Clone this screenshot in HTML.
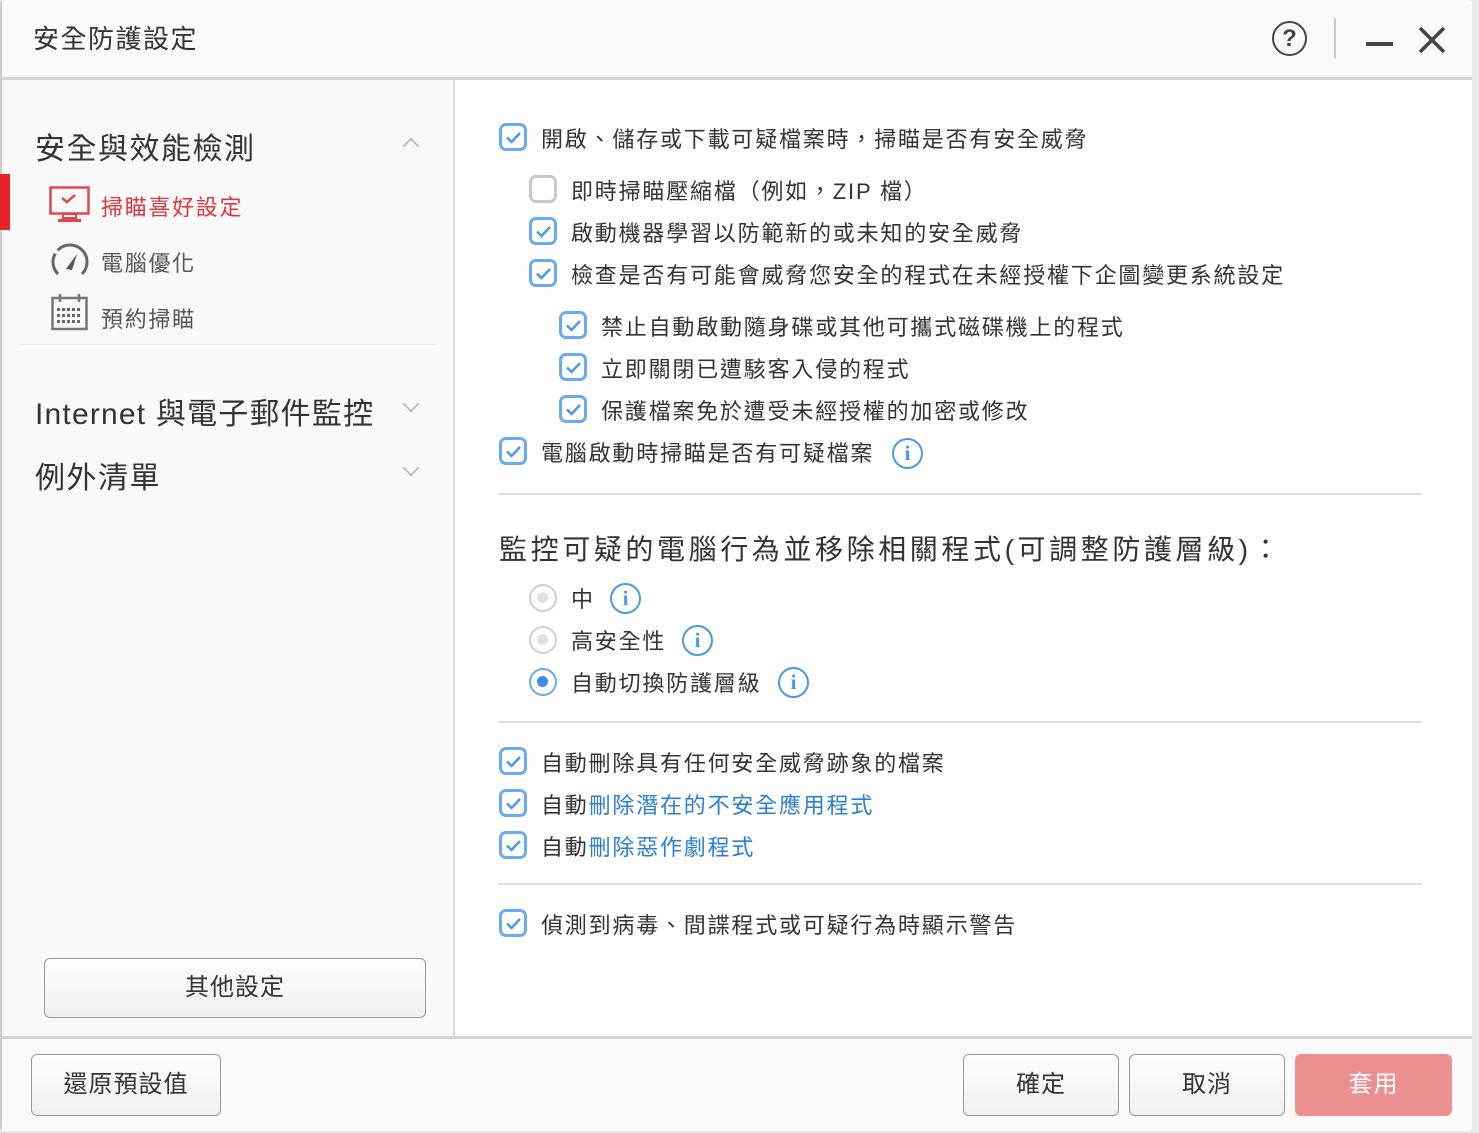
<!DOCTYPE html>
<html><head><meta charset="utf-8"><style>
*{margin:0;padding:0;box-sizing:border-box}
body{width:1479px;height:1133px;background:#e8e8e8;font-family:"Liberation Sans","Noto Sans CJK TC",sans-serif;color:#333;position:relative;overflow:hidden}
.win{position:absolute;left:0;top:0;width:1472px;height:1131px;background:#fff;border-radius:4px;box-shadow:inset 2px 0 0 #ccc;overflow:hidden}
.hdr{position:absolute;left:2px;top:0;right:0;height:80px;background:#fafafa;border-bottom:3px solid #d4d4d4}
.title{position:absolute;left:31px;top:19px;font-size:26px;letter-spacing:1.5px;color:#333}
.side{position:absolute;left:2px;top:80px;width:453px;height:956px;background:#f9f9f9;border-right:2px solid #ddd}
.ab{position:absolute;white-space:nowrap}
.nav{font-size:30px;letter-spacing:1.5px;color:#333}
.sub{font-size:22px;letter-spacing:1.7px;color:#555}
.it{font-size:22px;letter-spacing:1.8px;color:#333;line-height:28px;margin-top:2px}
.cb{position:absolute;width:28px;height:28px;border:3px solid #6aaaf0;border-radius:7px;background:#fff}
.cb.off{border-color:#c8c8c8}
.cb svg{position:absolute;left:2px;top:2px}
.rd{position:absolute;width:28px;height:28px;border:2.5px solid #cfcfcf;border-radius:50%;background:#fff}
.rd i{position:absolute;left:6px;top:6px;width:11px;height:11px;border-radius:50%;background:#e0e0e0}
.rd.on{border-color:#6aaaf0}.rd.on i{background:#3d8ee8}
.info{position:absolute;width:31px;height:31px;border:2.5px solid #4a98e6;border-radius:50%;color:#4a98e6;font:bold 21px "Liberation Serif",serif;text-align:center;line-height:26px}
.hr{position:absolute;left:498px;width:924px;height:2px;background:#ddd}
.btn{position:absolute;border:1.5px solid #999;border-radius:6px;background:linear-gradient(#fdfdfd,#f0f0f0);font-size:24px;text-align:center;color:#333;letter-spacing:1px}
.foot{position:absolute;left:2px;top:1036px;right:0;height:97px;background:#fafafa;border-top:3px solid #d4d4d4}
.blue{color:#2a7ed8}
.chev{position:absolute;width:12px;height:12px;border-right:2px solid #bbb;border-bottom:2px solid #bbb}
</style></head><body>
<div class="win">
<div class="hdr">
<div class="title">安全防護設定</div>
<div class="ab" style="left:1270px;top:21px;width:35px;height:35px;border:2.5px solid #444;border-radius:50%;text-align:center;font:bold 24px 'Liberation Sans',sans-serif;line-height:31px;color:#444">?</div>
<div class="ab" style="left:1332px;top:18px;width:2px;height:40px;background:#ccc"></div>
<div class="ab" style="left:1364px;top:42px;width:27px;height:4px;background:#444"></div>
<svg class="ab" style="left:1416px;top:26px" width="28" height="28"><path d="M2 2L26 26M26 2L2 26" stroke="#444" stroke-width="3.5"/></svg>
</div>
<div class="side">
<div class="ab" style="left:-2px;top:94px;width:10px;height:56px;background:#e8202a"></div>
<div class="ab nav" style="left:33px;top:44px">安全與效能檢測</div>
<div class="chev" style="left:403px;top:60px;transform:rotate(-135deg)"></div>
<svg class="ab" style="left:47px;top:106px" width="42" height="38"><rect x="1.5" y="1.5" width="38" height="26" fill="none" stroke="#e04850" stroke-width="2.5"/><path d="M13 12l5 4 8-7" fill="none" stroke="#e04850" stroke-width="2.5"/><rect x="14" y="28" width="13" height="4" fill="none" stroke="#e04850" stroke-width="2"/><rect x="9" y="33" width="23" height="3" fill="#e04850"/></svg>
<div class="ab sub" style="left:99px;top:110px;color:#e0353e">掃瞄喜好設定</div>
<svg class="ab" style="left:47px;top:162px" width="42" height="36"><path d="M9 32A17 17 0 1 1 33 32" fill="none" stroke="#666" stroke-width="3" stroke-dasharray="22 4 60"/><path d="M17 27L28 12 23 28Z" fill="#555"/></svg>
<div class="ab sub" style="left:99px;top:166px">電腦優化</div>
<svg class="ab" style="left:49px;top:213px" width="38" height="38"><rect x="1.5" y="5" width="34" height="31" fill="none" stroke="#777" stroke-width="2.5"/><path d="M9 1v8M28 1v8" stroke="#777" stroke-width="2.5"/><g fill="#666"><rect x="6" y="15" width="3" height="3"/><rect x="11" y="15" width="3" height="3"/><rect x="16" y="15" width="3" height="3"/><rect x="21" y="15" width="3" height="3"/><rect x="26" y="15" width="3" height="3"/><rect x="6" y="21" width="3" height="3"/><rect x="11" y="21" width="3" height="3"/><rect x="16" y="21" width="3" height="3"/><rect x="21" y="21" width="3" height="3"/><rect x="26" y="21" width="3" height="3"/><rect x="6" y="27" width="3" height="3"/><rect x="11" y="27" width="3" height="3"/><rect x="16" y="27" width="3" height="3"/><rect x="21" y="27" width="3" height="3"/><rect x="26" y="27" width="3" height="3"/></g></svg>
<div class="ab sub" style="left:99px;top:222px">預約掃瞄</div>
<div class="ab" style="left:18px;top:264px;width:415px;height:1px;background:#eee"></div>
<div class="ab nav" style="left:33px;top:309px;letter-spacing:1.2px">Internet 與電子郵件監控</div>
<div class="chev" style="left:403px;top:318px;transform:rotate(45deg)"></div>
<div class="ab nav" style="left:33px;top:373px">例外清單</div>
<div class="chev" style="left:403px;top:382px;transform:rotate(45deg)"></div>
<div class="btn" style="left:42px;top:878px;width:382px;height:60px;line-height:57px">其他設定</div>
</div>

<div class="cb" style="left:499px;top:123px"><svg width="19" height="19"><path d="M3 9.5l4.5 4.5 8.5-9" fill="none" stroke="#4a98e6" stroke-width="2.5"/></svg></div>
<div class="ab it" style="left:541px;top:124px">開啟、儲存或下載可疑檔案時，掃瞄是否有安全威脅</div>
<div class="cb off" style="left:529px;top:175px"></div>
<div class="ab it" style="left:571px;top:176px">即時掃瞄壓縮檔（例如，ZIP 檔）</div>
<div class="cb" style="left:529px;top:217px"><svg width="19" height="19"><path d="M3 9.5l4.5 4.5 8.5-9" fill="none" stroke="#4a98e6" stroke-width="2.5"/></svg></div>
<div class="ab it" style="left:571px;top:218px">啟動機器學習以防範新的或未知的安全威脅</div>
<div class="cb" style="left:529px;top:259px"><svg width="19" height="19"><path d="M3 9.5l4.5 4.5 8.5-9" fill="none" stroke="#4a98e6" stroke-width="2.5"/></svg></div>
<div class="ab it" style="left:571px;top:260px">檢查是否有可能會威脅您安全的程式在未經授權下企圖變更系統設定</div>
<div class="cb" style="left:559px;top:311px"><svg width="19" height="19"><path d="M3 9.5l4.5 4.5 8.5-9" fill="none" stroke="#4a98e6" stroke-width="2.5"/></svg></div>
<div class="ab it" style="left:601px;top:312px">禁止自動啟動隨身碟或其他可攜式磁碟機上的程式</div>
<div class="cb" style="left:559px;top:353px"><svg width="19" height="19"><path d="M3 9.5l4.5 4.5 8.5-9" fill="none" stroke="#4a98e6" stroke-width="2.5"/></svg></div>
<div class="ab it" style="left:601px;top:354px">立即關閉已遭駭客入侵的程式</div>
<div class="cb" style="left:559px;top:395px"><svg width="19" height="19"><path d="M3 9.5l4.5 4.5 8.5-9" fill="none" stroke="#4a98e6" stroke-width="2.5"/></svg></div>
<div class="ab it" style="left:601px;top:396px">保護檔案免於遭受未經授權的加密或修改</div>
<div class="cb" style="left:499px;top:437px"><svg width="19" height="19"><path d="M3 9.5l4.5 4.5 8.5-9" fill="none" stroke="#4a98e6" stroke-width="2.5"/></svg></div>
<div class="ab it" style="left:541px;top:438px">電腦啟動時掃瞄是否有可疑檔案</div>
<div class="info" style="left:892px;top:438px">i</div>
<div class="hr" style="top:493px"></div>
<div class="ab" style="left:499px;top:528px;font-size:28px;letter-spacing:3.6px;color:#333">監控可疑的電腦行為並移除相關程式(可調整防護層級)：</div>
<div class="rd" style="left:529px;top:584px"><i></i></div>
<div class="ab it" style="left:571px;top:584px">中</div>
<div class="info" style="left:610px;top:583px">i</div>
<div class="rd" style="left:529px;top:626px"><i></i></div>
<div class="ab it" style="left:571px;top:626px">高安全性</div>
<div class="info" style="left:682px;top:625px">i</div>
<div class="rd on" style="left:529px;top:668px"><i></i></div>
<div class="ab it" style="left:571px;top:668px">自動切換防護層級</div>
<div class="info" style="left:778px;top:667px">i</div>
<div class="hr" style="top:721px"></div>
<div class="cb" style="left:499px;top:747px"><svg width="19" height="19"><path d="M3 9.5l4.5 4.5 8.5-9" fill="none" stroke="#4a98e6" stroke-width="2.5"/></svg></div>
<div class="ab it" style="left:541px;top:748px">自動刪除具有任何安全威脅跡象的檔案</div>
<div class="cb" style="left:499px;top:789px"><svg width="19" height="19"><path d="M3 9.5l4.5 4.5 8.5-9" fill="none" stroke="#4a98e6" stroke-width="2.5"/></svg></div>
<div class="ab it" style="left:541px;top:790px">自動<span class="blue">刪除潛在的不安全應用程式</span></div>
<div class="cb" style="left:499px;top:831px"><svg width="19" height="19"><path d="M3 9.5l4.5 4.5 8.5-9" fill="none" stroke="#4a98e6" stroke-width="2.5"/></svg></div>
<div class="ab it" style="left:541px;top:832px">自動<span class="blue">刪除惡作劇程式</span></div>
<div class="hr" style="top:883px"></div>
<div class="cb" style="left:499px;top:909px"><svg width="19" height="19"><path d="M3 9.5l4.5 4.5 8.5-9" fill="none" stroke="#4a98e6" stroke-width="2.5"/></svg></div>
<div class="ab it" style="left:541px;top:910px">偵測到病毒、間諜程式或可疑行為時顯示警告</div>

<div class="foot">
<div class="btn" style="left:29px;top:15px;width:190px;height:62px;line-height:59px">還原預設值</div>
<div class="btn" style="left:961px;top:15px;width:156px;height:62px;line-height:59px">確定</div>
<div class="btn" style="left:1127px;top:15px;width:156px;height:62px;line-height:59px">取消</div>
<div class="btn" style="left:1293px;top:15px;width:157px;height:62px;line-height:62px;border:none;background:#ec8f90;color:#fff">套用</div>
</div>
</div>
</body></html>
